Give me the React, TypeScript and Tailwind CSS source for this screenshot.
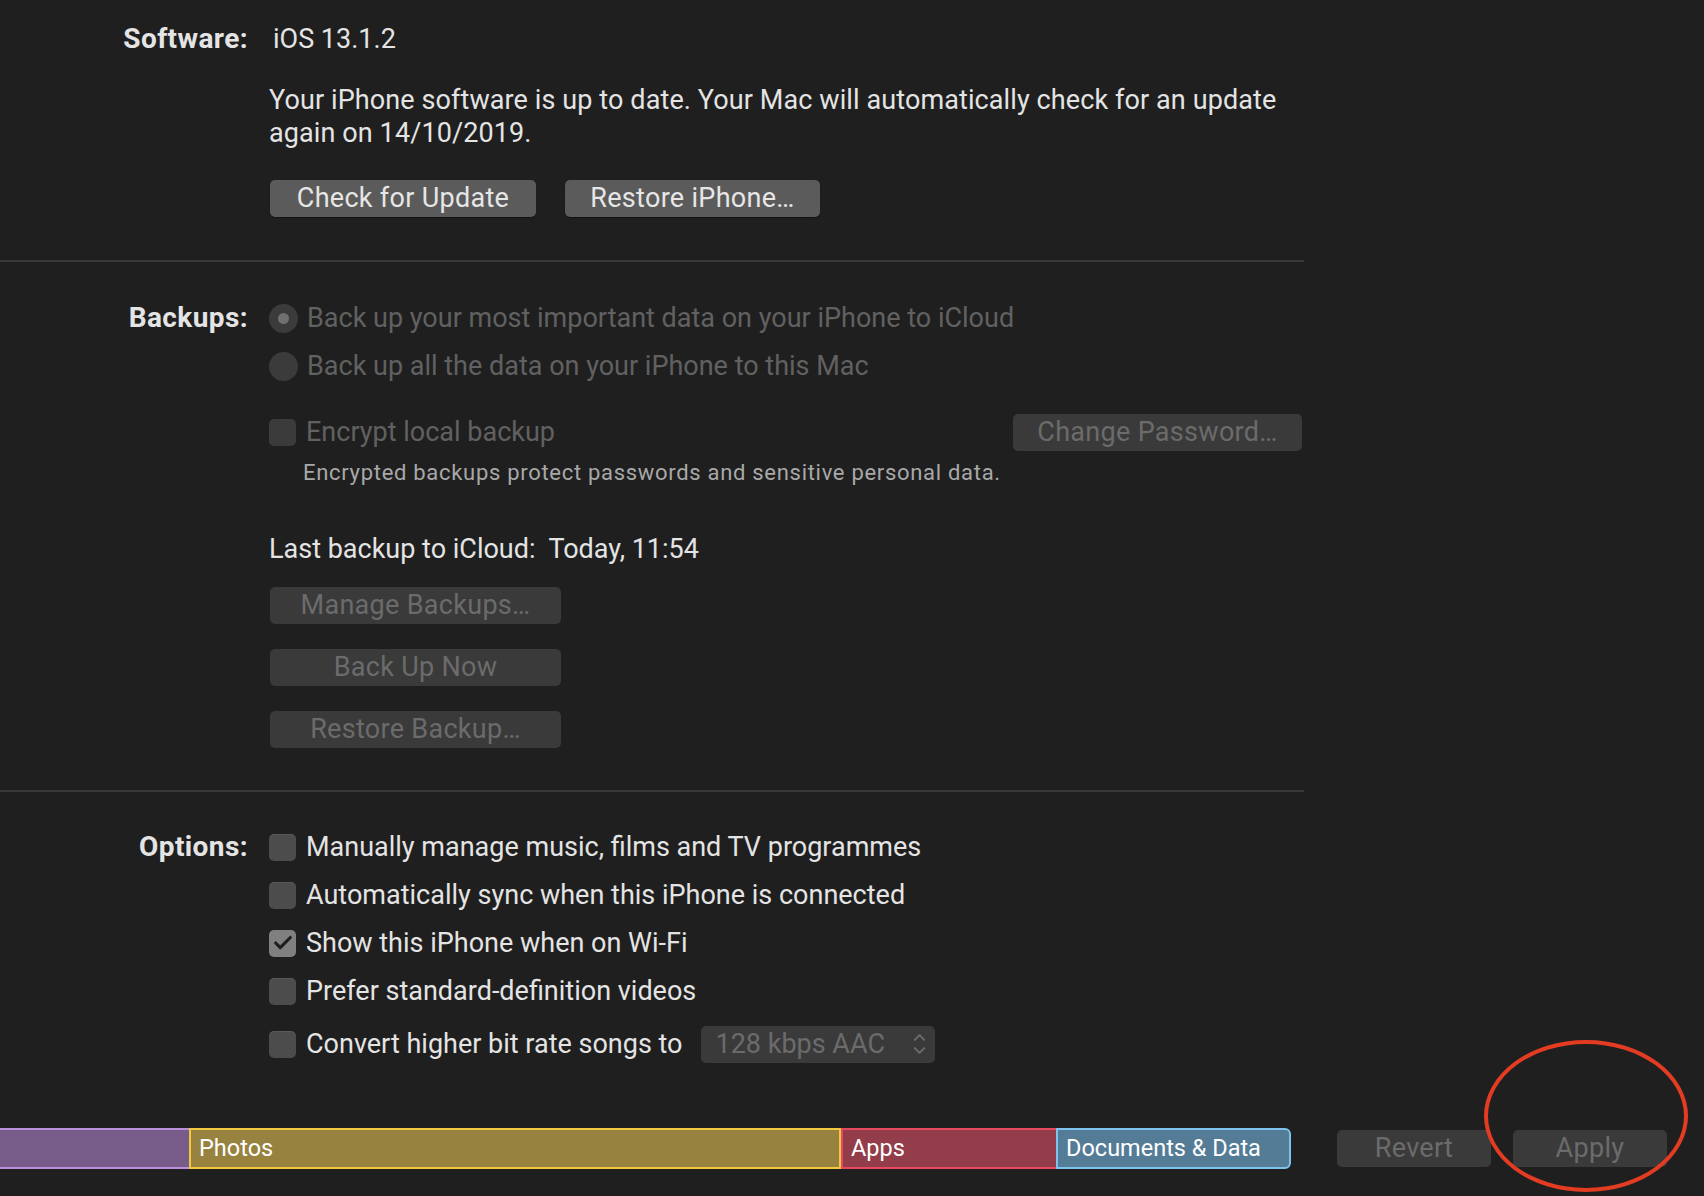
import { Check, ChevronDown, ChevronUp } from "lucide-react";

const font = { fontFamily: "Roboto, 'Liberation Sans', sans-serif" };

function Label({ children }: { children: React.ReactNode }) {
  return (
    <div className="w-[248px] shrink-0 text-right text-[28px] font-bold tracking-[0.4px] text-[#e4e4e4]">
      {children}
    </div>
  );
}

function Divider() {
  return <div className="h-[2px] w-[1304px] bg-[#383838]" />;
}

function Btn({
  children,
  width,
  disabled,
}: {
  children: React.ReactNode;
  width: string;
  disabled?: boolean;
}) {
  return (
    <div
      className={
        "flex h-[37px] items-center justify-center rounded-[5px] text-[27px] tracking-[0.3px] " +
        width +
        (disabled
          ? " bg-[#3a3a3a] text-[#6b6b6b]"
          : " bg-[#5b5b5b] text-[#e6e6e6] shadow-[0_1px_1px_rgba(0,0,0,0.4)]")
      }
    >
      {children}
    </div>
  );
}

function Box({ checked, disabled }: { checked?: boolean; disabled?: boolean }) {
  return (
    <div
      className={
        "flex h-[27px] w-[27px] shrink-0 items-center justify-center rounded-[5px] " +
        (checked
          ? "bg-[#808080]"
          : disabled
            ? "bg-[#3b3b3b]"
            : "bg-[#4c4c4c] shadow-[inset_0_1px_0_rgba(255,255,255,0.08)]")
      }
    >
      {checked && <Check className="h-[22px] w-[22px] text-[#1e1e1e]" strokeWidth={3.4} />}
    </div>
  );
}

function Radio({ on }: { on?: boolean }) {
  return (
    <div className="flex h-[29px] w-[29px] shrink-0 items-center justify-center rounded-full bg-[#3b3b3b]">
      {on && <div className="h-[11px] w-[11px] rounded-full bg-[#707070]" />}
    </div>
  );
}

const options = [
  { text: "Manually manage music, films and TV programmes" },
  { text: "Automatically sync when this iPhone is connected" },
  { text: "Show this iPhone when on Wi-Fi", checked: true },
  { text: "Prefer standard-definition videos" },
];

export default function App() {
  return (
    <div
      className="relative h-[1196px] w-[1704px] overflow-hidden bg-[#1f1f1f] text-[#e4e4e4]"
      style={font}
    >
      {/* Software */}
      <div className="flex pt-[23px]">
        <Label>
          <div className="leading-[32px]">Software:</div>
        </Label>
        <div className="ml-[21px]">
          <div className="ml-[4px] text-[27px] leading-[32px]">iOS 13.1.2</div>
          <p className="mt-[29px] w-[1040px] text-[27px] leading-[33px] tracking-[0.1px]">
            Your iPhone software is up to date. Your Mac will automatically check for an update
            again on 14/10/2019.
          </p>
          <div className="mt-[30px] flex gap-[29px] pl-[1px]">
            <Btn width="w-[266px]">Check for Update</Btn>
            <Btn width="w-[255px]">Restore iPhone…</Btn>
          </div>
        </div>
      </div>
      <div className="mt-[43px]">
        <Divider />
      </div>

      {/* Backups */}
      <div className="mt-[32px] flex">
        <Label>
          <div className="leading-[48px]">Backups:</div>
        </Label>
        <div className="ml-[21px] w-[1033px] text-[27px] text-[#616161]">
          <div className="flex h-[48px] items-center gap-[9px]">
            <Radio on />
            <span>Back up your most important data on your iPhone to iCloud</span>
          </div>
          <div className="flex h-[48px] items-center gap-[9px]">
            <Radio />
            <span>Back up all the data on your iPhone to this Mac</span>
          </div>
          <div className="mt-[18px] flex h-[48px] items-center">
            <Box disabled />
            <span className="ml-[10px]">Encrypt local backup</span>
            <div className="ml-auto">
              <Btn width="w-[289px]" disabled>
                Change Password…
              </Btn>
            </div>
          </div>
          <div className="ml-[34px] mt-[5px] text-[22px] leading-[24px] tracking-[0.7px] text-[#a8a8a8]">
            Encrypted backups protect passwords and sensitive personal data.
          </div>
          <div className="mt-[48px] leading-[32px] text-[#e4e4e4]">
            Last backup to iCloud:&nbsp; Today, 11:54
          </div>
          <div className="mt-[22px] flex flex-col gap-[25px] pl-[1px]">
            <Btn width="w-[291px]" disabled>
              Manage Backups…
            </Btn>
            <Btn width="w-[291px]" disabled>
              Back Up Now
            </Btn>
            <Btn width="w-[291px]" disabled>
              Restore Backup…
            </Btn>
          </div>
        </div>
      </div>
      <div className="mt-[42px]">
        <Divider />
      </div>

      {/* Options */}
      <div className="mt-[31px] flex">
        <Label>
          <div className="leading-[48px]">Options:</div>
        </Label>
        <div className="ml-[21px] text-[27px]">
          {options.map((o) => (
            <div key={o.text} className="flex h-[48px] items-center">
              <Box checked={o.checked} />
              <span className="ml-[10px]">{o.text}</span>
            </div>
          ))}
          <div className="mt-[5px] flex h-[48px] items-center">
            <Box />
            <span className="ml-[10px]">Convert higher bit rate songs to</span>
            <div className="ml-[18px] flex h-[37px] w-[234px] items-center justify-between rounded-[5px] bg-[#3a3a3a] pl-[15px] pr-[6px] text-[#6b6b6b]">
              <span>128 kbps AAC</span>
              <div className="flex flex-col items-center">
                <ChevronUp className="-mb-[6px] h-[19px] w-[19px]" strokeWidth={2.5} />
                <ChevronDown className="h-[19px] w-[19px]" strokeWidth={2.5} />
              </div>
            </div>
          </div>
        </div>
      </div>

      {/* Storage bar + actions */}
      <div className="mt-[60px] flex items-center">
        <div className="flex h-[41px] w-[1291px] text-[23.5px] text-white">
          <div className="w-[189px] border-y-2 border-[#b98fdc] bg-[#775b88]" />
          <div className="flex w-[652px] items-center border-2 border-[#f4c83e] bg-[#97823f] pl-[8px]">
            Photos
          </div>
          <div className="flex w-[215px] items-center border-y-2 border-l-2 border-[#e8495f] bg-[#933d4a] pl-[8px]">
            Apps
          </div>
          <div className="flex w-[235px] items-center rounded-r-[6px] border-2 border-[#7cc4ee] bg-[#557c96] pl-[8px]">
            Documents &amp; Data
          </div>
        </div>
        <div className="ml-[46px] flex gap-[22px]">
          <Btn width="w-[154px]" disabled>
            Revert
          </Btn>
          <Btn width="w-[154px]" disabled>
            Apply
          </Btn>
        </div>
      </div>

      {/* annotation ring */}
      <div className="pointer-events-none absolute left-[1484px] top-[1040px] h-[152px] w-[204px] rounded-[50%] border-[4px] border-[#e33c22]" />
    </div>
  );
}
